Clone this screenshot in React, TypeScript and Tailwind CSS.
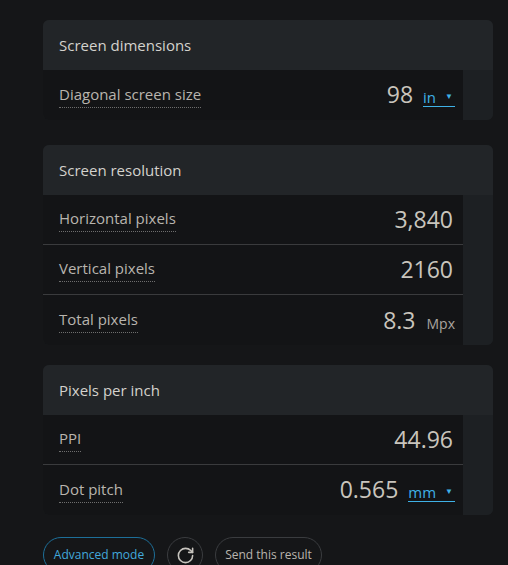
import React from 'react';
import { RotateCw } from 'lucide-react';

interface RowData {
  label: string;
  value: string;
  unit?: string;
  select?: boolean;
}

interface CardData {
  title: string;
  rows: RowData[];
}

const cards: CardData[] = [
  {
    title: 'Screen dimensions',
    rows: [{ label: 'Diagonal screen size', value: '98', unit: 'in', select: true }],
  },
  {
    title: 'Screen resolution',
    rows: [
      { label: 'Horizontal pixels', value: '3,840' },
      { label: 'Vertical pixels', value: '2160' },
      { label: 'Total pixels', value: '8.3', unit: 'Mpx' },
    ],
  },
  {
    title: 'Pixels per inch',
    rows: [
      { label: 'PPI', value: '44.96' },
      { label: 'Dot pitch', value: '0.565', unit: 'mm', select: true },
    ],
  },
];

const Row = ({ row, last }: { row: RowData; last: boolean }) => (
  <div className="flex">
    <div
      className={`flex-1 h-[50px] flex items-center justify-between pl-4 pr-[10px] bg-[#131416] ${
        last ? '' : 'border-b border-[#3a3b3d]'
      }`}
    >
      <span className="text-[15px] text-[#b9b5ae] leading-none pt-[4px] pb-[5px] border-b border-dotted border-[#6e6e6e]">
        {row.label}
      </span>
      <div className="flex items-baseline">
        <span className="text-[23px] text-[#c9c5bd] leading-none">{row.value}</span>
        {row.unit && row.select && (
          <span className="ml-[10px] -mr-[2px] text-[15px] text-[#3fb1e6] leading-none border-b border-[#3fb1e6] flex items-center pb-[1px]">
            {row.unit}
            <span className="ml-[9px] mr-[2px] text-[8px] relative -top-[2px]">▼</span>
          </span>
        )}
        {row.unit && !row.select && (
          <span className="ml-[11px] -mr-[2px] text-[14px] text-[#a9a59f] leading-none">{row.unit}</span>
        )}
      </div>
    </div>
    <div className="w-[30px] bg-[#1d2023]" />
  </div>
);

export default function App() {
  return (
    <div
      className="min-h-[565px] bg-[#151618] pt-5 pl-[43px] pr-[15px] overflow-hidden"
      style={{ fontFamily: '"Open Sans", "Noto Sans", sans-serif' }}
    >
      <div className="flex flex-col gap-[25px]">
        {cards.map((card, ci) => (
          <div
            key={card.title}
            className={`rounded-md overflow-hidden bg-[#1d2023] ${ci === 2 ? '-mt-[5px]' : ''}`}
          >
            <div className="h-[50px] flex items-center pl-4 bg-[#222528]">
              <span className="text-[15px] text-[#d4d2cd]">{card.title}</span>
            </div>
            {card.rows.map((row, i) => (
              <Row key={row.label} row={row} last={i === card.rows.length - 1} />
            ))}
          </div>
        ))}
      </div>
      <div className="flex items-center gap-3 mt-[22px]">
        <button className="w-[112px] h-9 rounded-full border border-[#1d6f99] text-[12px] text-[#42a9dc]">
          Advanced mode
        </button>
        <button className="w-9 h-9 rounded-full border border-[#3a3c3f] flex items-center justify-center text-[#c7c4be]">
          <RotateCw size={19} strokeWidth={2} />
        </button>
        <button className="w-[107px] h-9 rounded-full border border-[#3a3c3f] text-[12px] text-[#b9b5ae]">
          Send this result
        </button>
      </div>
    </div>
  );
}
